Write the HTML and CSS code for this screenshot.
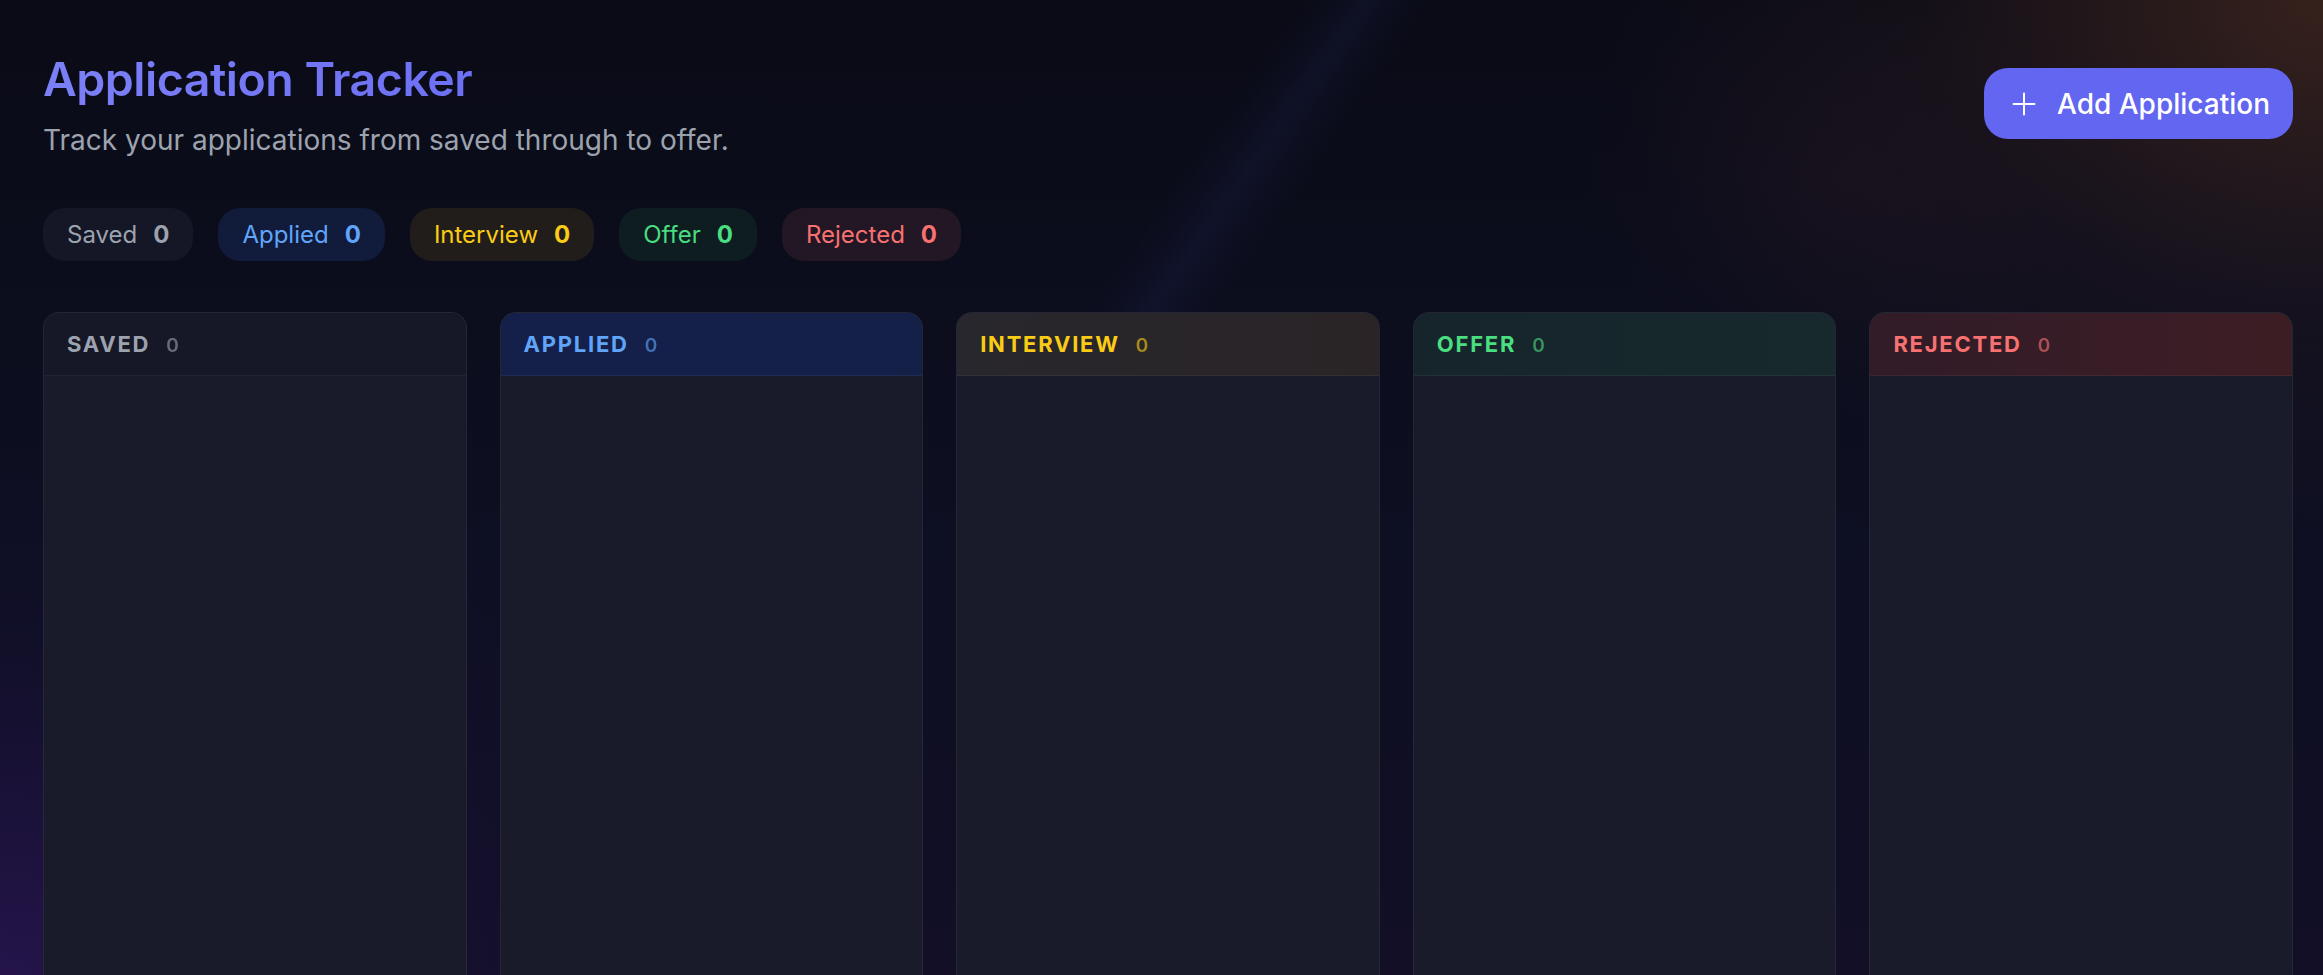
FILE: index.html
```html
<!DOCTYPE html>
<html lang="en">
<head>
<meta charset="utf-8">
<title>Application Tracker</title>
<link rel="stylesheet" href="styles.css">
</head>
<body>
<main class="page">
  <header class="top">
    <div class="heading">
      <h1 class="title">Application Tracker</h1>
      <p class="subtitle">Track your applications from saved through to offer.</p>
    </div>
    <button class="add-btn" type="button">
      <svg class="plus" viewBox="0 0 24 24" width="24" height="24" fill="none" stroke="currentColor" stroke-width="2" stroke-linecap="round"><path d="M12 1.5v21M1.5 12h21"/></svg>
      <span>Add Application</span>
    </button>
  </header>

  <div class="pills">
    <div class="pill pill-saved"><span>Saved</span><b>0</b></div>
    <div class="pill pill-applied"><span>Applied</span><b>0</b></div>
    <div class="pill pill-interview"><span>Interview</span><b>0</b></div>
    <div class="pill pill-offer"><span>Offer</span><b>0</b></div>
    <div class="pill pill-rejected"><span>Rejected</span><b>0</b></div>
  </div>

  <section class="board">
    <div class="col col-saved">
      <div class="col-head"><span class="col-name">Saved</span><span class="col-count">0</span></div>
      <div class="col-body"></div>
    </div>
    <div class="col col-applied">
      <div class="col-head"><span class="col-name">Applied</span><span class="col-count">0</span></div>
      <div class="col-body"></div>
    </div>
    <div class="col col-interview">
      <div class="col-head"><span class="col-name">Interview</span><span class="col-count">0</span></div>
      <div class="col-body"></div>
    </div>
    <div class="col col-offer">
      <div class="col-head"><span class="col-name">Offer</span><span class="col-count">0</span></div>
      <div class="col-body"></div>
    </div>
    <div class="col col-rejected">
      <div class="col-head"><span class="col-name">Rejected</span><span class="col-count">0</span></div>
      <div class="col-body"></div>
    </div>
  </section>
</main>
</body>
</html>
```

FILE: styles.css
```css
* { box-sizing: border-box; }

html, body {
  margin: 0;
  height: 100%;
}

body {
  overflow: hidden;
  background-color: #0b0c19;
  background-image:
    linear-gradient(125deg, rgba(45, 55, 135, 0) 49.8%, rgba(45, 55, 140, 0.06) 51.2%, rgba(48, 58, 145, 0.13) 52.3%, rgba(45, 55, 140, 0.06) 53.4%, rgba(45, 55, 135, 0) 54.8%),
    radial-gradient(ellipse 720px 560px at 100% 0%, rgba(115, 64, 36, 0.42), rgba(80, 45, 40, 0.14) 55%, rgba(0, 0, 0, 0) 100%),
    radial-gradient(ellipse 260px 200px at 1840px 180px, rgba(110, 50, 50, 0.08), rgba(0, 0, 0, 0) 100%),
    radial-gradient(ellipse 820px 520px at 0% 100%, rgba(72, 30, 145, 0.34), rgba(40, 20, 90, 0.12) 60%, rgba(0, 0, 0, 0) 100%),
    linear-gradient(180deg, #0a0b16 0%, #0d0f22 55%, #120f26 100%);
  background-size: 100% 420px, 100% 100%, 100% 100%, 100% 100%, 100% 100%;
  background-repeat: no-repeat;
  font-family: Inter, "Noto Sans", "Liberation Sans", sans-serif;
  color: #e5e7eb;
}

.page {
  display: flex;
  flex-direction: column;
  height: 100%;
  padding: 52px 30px 0 43px;
}

.top {
  display: flex;
  justify-content: space-between;
  align-items: flex-start;
}

.title {
  margin: 0;
  font-size: 46.5px;
  line-height: 1.2;
  font-weight: 600;
  letter-spacing: -0.5px;
  background: linear-gradient(90deg, #7c80f7 0%, #6366f1 100%);
  -webkit-background-clip: text;
  background-clip: text;
  color: transparent;
}

.subtitle {
  margin: 13px 0 0;
  font-size: 28px;
  line-height: 1.4;
  color: #9ca3af;
}

.add-btn {
  display: flex;
  align-items: center;
  gap: 21px;
  height: 71px;
  margin-top: 16px;
  padding: 0 23px 0 28px;
  border: 0;
  border-radius: 24px;
  background: #6366f1;
  color: #ffffff;
  font-family: inherit;
  font-size: 28px;
  font-weight: 500;
}

.plus {
  width: 24px;
  height: 24px;
  flex: none;
}

.pills {
  display: flex;
  gap: 25px;
  margin-top: 48px;
}

.pill {
  display: flex;
  align-items: center;
  gap: 16px;
  height: 53px;
  padding: 0 24px;
  border-radius: 22px;
  font-size: 24px;
}

.pill b { font-weight: 700; }

.pill-saved { background: rgba(148, 156, 180, 0.07); color: #9ca3af; }
.pill-applied { background: rgba(59, 110, 246, 0.14); color: #60a5fa; }
.pill-interview { background: rgba(250, 204, 21, 0.09); color: #facc15; }
.pill-offer { background: rgba(34, 197, 94, 0.09); color: #4ade80; }
.pill-rejected { background: rgba(248, 113, 113, 0.1); color: #f87171; }

.board {
  flex: 1;
  min-height: 0;
  display: grid;
  grid-template-columns: repeat(5, 1fr);
  gap: 33px;
  margin-top: 51px;
}

.col {
  display: flex;
  flex-direction: column;
  border: 1px solid rgba(255, 255, 255, 0.05);
  border-bottom: 0;
  border-radius: 16px 16px 0 0;
  background: rgba(27, 29, 44, 0.9);
  overflow: hidden;
}

.col-head {
  display: flex;
  align-items: baseline;
  gap: 16px;
  height: 63px;
  flex: none;
  padding: 18px 23px 0;
  border-bottom: 1px solid rgba(255, 255, 255, 0.05);
}

.col-name {
  font-size: 22px;
  font-weight: 700;
  letter-spacing: 0.08em;
  text-transform: uppercase;
}

.col-count {
  font-size: 19px;
  font-weight: 600;
  opacity: 0.6;
}

.col-body {
  flex: 1;
  background: rgba(25, 27, 42, 0.95);
}

.col-saved .col-head { background: #161827; color: #9ca3af; }
.col-applied .col-head { background: linear-gradient(90deg, #14204a, #142048); color: #60a5fa; }
.col-interview .col-head { background: linear-gradient(90deg, #28272d, #2a2426); color: #facc15; }
.col-offer .col-head { background: linear-gradient(90deg, #15252b, #18292d); color: #4ade80; }
.col-rejected .col-head { background: linear-gradient(90deg, #311c28, #3d1d24); color: #f87171; }
```
